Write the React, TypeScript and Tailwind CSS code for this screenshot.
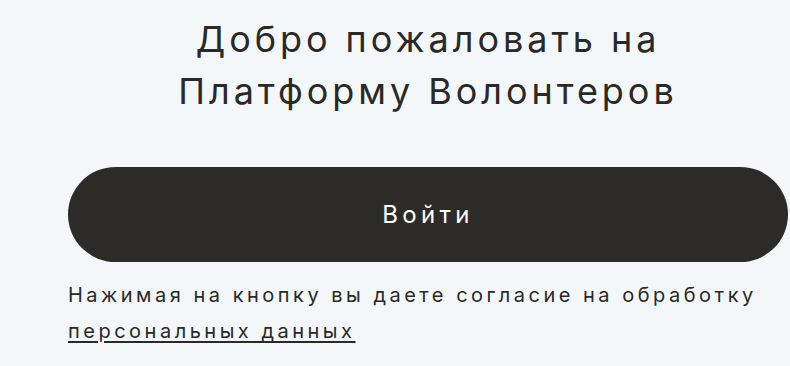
import React from "react";

export default function App() {
  return (
    <div className="min-h-[366px] w-[790px] bg-[#f4f7fa] text-[#2a2925]" style={{ fontFamily: "Inter, 'Noto Sans', sans-serif" }}>
      <div className="ml-[68px] w-[720px] pt-[13px]">
        <h1 className="text-center text-[36px] leading-[52px] font-normal tracking-[0.11em]">
          Добро пожаловать на
          <br />
          Платформу Волонтеров
        </h1>
        <button className="mt-[50px] flex h-[95px] w-full items-center justify-center rounded-full bg-[#2d2b27] text-[24px] font-normal tracking-[0.18em] text-white">
          Войти
        </button>
        <p className="mt-[15px] text-[20px] leading-[36px] tracking-[0.175em]">
          Нажимая на кнопку вы даете согласие на обработку
          <br />
          <a className="underline decoration-[1.5px] underline-offset-[3px]">персональных данных</a>
        </p>
      </div>
    </div>
  );
}
